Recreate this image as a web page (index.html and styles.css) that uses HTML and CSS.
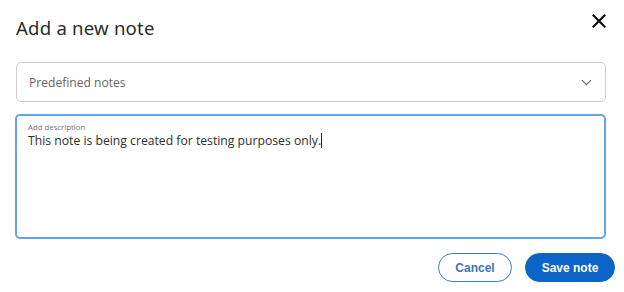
FILE: index.html
```html
<!DOCTYPE html>
<html>
<head>
<meta charset="utf-8">
<link rel="stylesheet" href="styles.css">
</head>
<body>
<div class="dialog">
  <div class="header">
    <h1 class="title">Add a new note</h1>
    <button class="close" aria-label="Close">
      <svg width="14" height="14" viewBox="0 0 14 14"><path d="M1.5 1.5 L12.5 12.5 M12.5 1.5 L1.5 12.5" stroke="#111" stroke-width="2.2" stroke-linecap="square"/></svg>
    </button>
  </div>
  <div class="select">
    <span class="select-text">Predefined notes</span>
    <svg class="chevron" width="11" height="7" viewBox="0 0 11 7"><path d="M1 1.2 L5.5 5.7 L10 1.2" fill="none" stroke="#6b6b6b" stroke-width="1.2"/></svg>
  </div>
  <div class="textarea">
    <div class="label">Add description</div>
    <div class="value">This note is being created for testing purposes only.<span class="caret"></span></div>
  </div>
  <div class="actions">
    <button class="btn btn-outline">Cancel</button>
    <button class="btn btn-primary">Save note</button>
  </div>
</div>
</body>
</html>
```
FILE: styles.css
```css
html, body {
  margin: 0;
  padding: 0;
  background: #ffffff;
}
.dialog {
  width: 624px;
  height: 292px;
  box-sizing: border-box;
  padding: 0 9px 0 16px;
  display: flex;
  flex-direction: column;
}
.header {
  display: flex;
  align-items: center;
  justify-content: space-between;
  height: 48px;
  padding-top: 8px;
  box-sizing: border-box;
}
.title {
  margin: 0;
  font-family: "Noto Sans", sans-serif;
  font-weight: 400;
  font-size: 18.6px;
  line-height: 26px;
  color: #2b2b2b;
  letter-spacing: 0.2px;
}
.close {
  align-self: flex-start;
  margin-top: 6px;
  border: none;
  background: none;
  padding: 0;
  margin-right: 9px;
  width: 14px;
  height: 14px;
  display: flex;
}
.select {
  margin-top: 14px;
  width: 590px;
  height: 40px;
  box-sizing: border-box;
  border: 1px solid #cfcfcf;
  border-radius: 5px;
  display: flex;
  align-items: center;
  justify-content: space-between;
  padding: 0 13px 0 12px;
}
.select-text {
  font-family: "Open Sans", sans-serif;
  font-size: 12.1px;
  color: #666;
}
.textarea {
  margin-top: 12px;
  width: 591px;
  margin-left: -1px;
  height: 125px;
  box-sizing: border-box;
  border: 2px solid #62a4ea;
  border-radius: 5px;
  padding: 6px 11px;
}
.label {
  font-family: "Open Sans", sans-serif;
  font-size: 7.8px;
  color: #777;
  line-height: 10px;
}
.value {
  font-family: "Open Sans", sans-serif;
  font-size: 12.2px;
  color: #2e2e2e;
  line-height: 18px;
}
.caret {
  display: inline-block;
  width: 1px;
  height: 15px;
  background: #222;
  vertical-align: -3px;
}
.actions {
  display: flex;
  justify-content: flex-end;
  gap: 13px;
  margin-top: 14px;
}
.btn {
  height: 29px;
  border-radius: 15px;
  font-family: "Liberation Sans", sans-serif;
  font-weight: 700;
  font-size: 12px;
  padding: 0;
  box-sizing: border-box;
}
.btn-outline {
  width: 74px;
  background: #fff;
  border: 1px solid #3b7cc4;
  color: #3b74b8;
}
.btn-primary {
  width: 90px;
  background: #0b64c6;
  border: 1px solid #0b64c6;
  color: #fff;
}
```
